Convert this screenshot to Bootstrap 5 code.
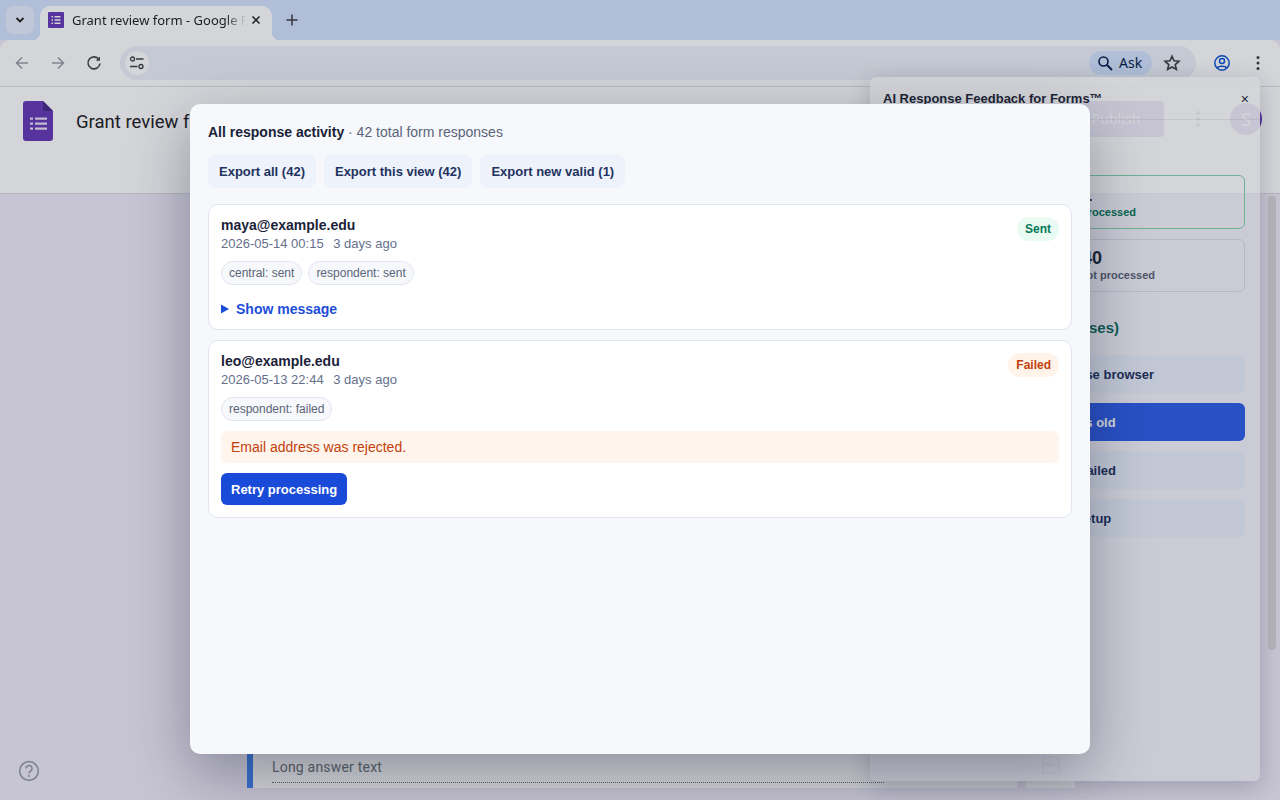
<!DOCTYPE html>
<html lang="en">
<head>
<meta charset="utf-8">
<title>Grant review form</title>
<link href="https://cdn.jsdelivr.net/npm/bootstrap@5.3.0/dist/css/bootstrap.min.css" rel="stylesheet">
<style>
html,body{height:800px;overflow:hidden}
body{background:#f0ebf8;font-family:"Liberation Sans",Arial,sans-serif;position:relative;color:#1f2937}
.tabstrip{height:40px;background:#d3e3fd;padding:6px 0 0 6px}
.tab-menu{width:28px;height:28px;border-radius:8px;background:#e6eefc}
.chrome-tab{width:232px;height:34px;margin-left:6px;background:#fff;border-radius:10px 10px 0 0;padding:0 8px 6px;font:13px/28px "Noto Sans",sans-serif;color:#1f1f1f;position:relative}
.chrome-tab::before,.chrome-tab::after{content:"";position:absolute;bottom:0;width:8px;height:8px}
.chrome-tab::before{left:-8px;background:radial-gradient(circle at 0 0,transparent 8px,#fff 8.5px)}
.chrome-tab::after{right:-8px;background:radial-gradient(circle at 100% 0,transparent 8px,#fff 8.5px)}
.tab-title{width:174px;margin-left:8px;overflow:hidden;white-space:nowrap;-webkit-mask-image:linear-gradient(90deg,#000 88%,transparent);mask-image:linear-gradient(90deg,#000 88%,transparent)}
.tab-close{margin-left:auto;margin-right:2px}
.plus-wrap{margin-left:12px;padding-top:6px}
.toolbar{height:47px;background:#fff;border-bottom:1px solid #e0e0e0;border-radius:10px 10px 0 0;padding:6px 0 0 13px;margin-top:0}
.nav-ico{width:36px;flex:none;height:34px}
.omnibox{width:1076px;height:34px;margin-left:-1px;background:#edf1f8;border-radius:17px;padding:0 44px 0 5px;position:relative}
.site-ico{width:24px;height:24px;border-radius:50%;background:#fff}
.ask-pill{width:63px;height:24px;border-radius:12px;background:#d3e3fd;margin-left:auto;font:14px/24px "Noto Sans",sans-serif;color:#041e49;gap:6px;padding-left:8px}
.star-ico{position:absolute;right:15px;top:8px}
.prof-ico{margin-left:18px}
.dots-ico{margin-left:26px}
.form-head{height:107px;background:#fff;border-bottom:1px solid #dadce0;padding:14px 18px 0 23px;position:relative}
.doc-title{font:18.500px/1 Roboto,sans-serif;color:#202124;margin-left:23px;margin-top:12px}
.publish-btn{position:absolute;left:1068px;top:14px;width:96px;height:36px;border-radius:4px;background:#673ab7;color:#fff;font:14px/36px "Noto Sans",sans-serif;text-align:center}
.more-dots{position:absolute;left:1196px;top:23px}
.avatar-s{position:absolute;left:1230px;top:16px;width:32px;height:32px;border-radius:50%;background:#673ab7;color:#fff;font:18px/32px "Noto Sans",sans-serif;text-align:center}
.form-body{height:606px;padding-left:247px;padding-bottom:12px;position:relative}
.q-card{width:770px;height:54px;background:#fff;border-left:6px solid #4285f4;padding:24px 0 0 19px;font:14px/18px Roboto,sans-serif;letter-spacing:.2px;color:#70757a;margin-top:auto}
.q-line{width:612px;border-bottom:1px dotted #70757a;margin-top:6px}
.q-side{width:49px;height:54px;background:#fff;margin-left:9px;margin-top:auto;padding-top:21px}
.scroll-thumb{position:absolute;left:1268px;top:2px;width:8px;height:454px;background:#dadada;border-radius:4px}
.help-ico{position:absolute;left:18px;top:566px}
.side-panel{position:absolute;left:870px;top:77px;width:390px;height:704px;border-radius:6px;background:linear-gradient(rgba(255,255,255,.9) 116px,rgba(244,244,251,.9) 116px);box-shadow:0 6px 24px rgba(15,23,42,.22);padding:0 15px 0 13px}
.panel-head{height:43px;border-bottom:1px solid rgba(15,23,42,.08);margin:0 -15px 0 -13px;padding:14px 11px 0 13px;font-size:13px;font-weight:700;line-height:16px;color:#1f2937}
.panel-x{font-size:14px;font-weight:400;color:#1f2937;margin-left:auto;margin-right:0}
.stat-box{height:54px;border:1px solid #d9dce6;border-radius:6px;text-align:right;padding-top:8px}
.stat-new{border-color:#86d4ad;margin-top:55px}
.stat-old{height:53px;margin-top:10px;padding-right:89px;padding-top:7px}
.stat-new{padding-right:108px}
.stat-num{font-size:18px;line-height:22px;font-weight:700;color:#1f2937}
.stat-new .stat-num{padding-right:44px}
.stat-old .stat-num{padding-right:53px}
.stat-cap{font-size:11px;line-height:13px;font-weight:700;color:#5b6478}
.stat-new .stat-cap{color:#047857}
.panel-h{font-size:15px;line-height:20px;font-weight:700;color:#0f6b5b;margin-top:26px;text-align:right;padding-right:126px;margin-bottom:17px}
.panel-btn{height:38px;border-radius:6px;background:#eaf0fb;color:#233260;font-size:13px;font-weight:700;line-height:38px;padding-top:1px;text-align:center;margin-bottom:10px;white-space:nowrap}
.panel-on{background:#2f5fe8;color:#fff}
.scrim{position:absolute;inset:0;background:rgba(15,23,42,.18)}
.resp-modal{position:absolute;left:190px;top:104px;width:900px;height:650px;background:#f6f8fc;border-radius:10px;box-shadow:0 20px 60px rgba(15,23,42,.35);padding:18px}
.modal-sum{font-size:14px;line-height:20px;color:#5b6478}
.modal-sum strong{color:#1a2238}
.exp-row{margin-top:12px;margin-bottom:16px}
.exp-btn{height:34px;border:0;border-radius:8px;background:#eef3fb;color:#233260;font-size:13px;font-weight:700;padding:1px 11px 0;line-height:33px}
.resp-card{background:#fff;border:1px solid #e1e5ef;border-radius:10px;padding:12px;margin-bottom:10px;position:relative}
.resp-mail{font-size:14px;line-height:17px;font-weight:700;color:#1a2238}
.resp-date{font-size:13px;line-height:19px;color:#64708a}
.resp-date span{margin-left:6px}
.chip-row{margin-top:8px;gap:6px}
.tag-chip{height:24px;border:1px solid #e1e5ef;border-radius:12px;background:#f6f8fb;font-size:12px;line-height:22px;padding:0 7px;color:#5b6478}
.state-pill{position:absolute;right:12px;top:12px;height:24px;border-radius:12px;font-size:12px;line-height:24px;font-weight:700;padding:0 8px}
.state-sent{background:#e9fbf2;color:#047857}
.state-fail{background:#fff3ea;color:#c2410c}
.show-msg{margin-top:15px;font-size:14px;line-height:18px;font-weight:700;color:#1d4ed8;cursor:pointer;margin-bottom:-1px}
.show-msg summary{list-style:none;display:flex;align-items:center;gap:7px}
.show-msg summary::-webkit-details-marker{display:none}
.err-box{height:32px;margin-top:10px;background:#fff5ed;border-radius:6px;font-size:14px;line-height:32px;color:#c2410c;padding:0 10px}
.retry-btn{height:32px;margin-top:10px;border:0;border-radius:6px;background:#1a4bd8;color:#fff;font-size:13px;font-weight:700;padding:1px 10px 0;line-height:31px;display:block}
</style>
</head>
<body>
<div class="tabstrip d-flex">
  <div class="tab-menu d-flex align-items-center justify-content-center">
    <svg width="12" height="12" viewBox="0 0 12 12"><path d="M2.500 4l3.500 3.500L9.500 4" fill="none" stroke="#1f1f1f" stroke-width="1.800"/></svg>
  </div>
  <div class="chrome-tab d-flex align-items-center">
    <svg width="16" height="16" viewBox="0 0 16 16"><rect width="16" height="16" rx="1" fill="#673ab7"/><path d="M3.500 4h1.500v1.500H3.500zM3.500 7.250h1.500v1.500H3.500zM3.500 10.500h1.500V12H3.500zM6.500 4h6v1.500h-6zM6.500 7.250h6v1.500h-6zM6.500 10.500h6V12h-6z" fill="#fff"/></svg>
    <div class="tab-title">Grant review form - Google Forms</div>
    <svg class="tab-close" width="12" height="12" viewBox="0 0 12 12"><path d="M2.500 2.500l7 7M9.500 2.500l-7 7" stroke="#1f1f1f" stroke-width="1.500"/></svg>
  </div>
  <div class="plus-wrap"><svg class="d-block" width="16" height="16" viewBox="0 0 16 16"><path d="M8 2.500v11M2.500 8h11" stroke="#3c4043" stroke-width="1.500"/></svg></div>
</div>

<div class="toolbar d-flex">
  <div class="nav-ico d-flex align-items-center"><svg width="18" height="18" viewBox="0 0 18 18"><path d="M15 9H4M9 3.500L3.500 9 9 14.500" fill="none" stroke="#9aa0a6" stroke-width="1.500"/></svg></div>
  <div class="nav-ico d-flex align-items-center"><svg width="18" height="18" viewBox="0 0 18 18"><path d="M3 9h11M9 3.500L14.500 9 9 14.500" fill="none" stroke="#9aa0a6" stroke-width="1.500"/></svg></div>
  <div class="nav-ico d-flex align-items-center"><svg width="18" height="18" viewBox="0 0 18 18"><path d="M14 5.500A6 6 0 1 0 15 9.500" fill="none" stroke="#474747" stroke-width="1.600"/><path d="M15 2.500v4.200h-4.200z" fill="#474747"/></svg></div>
  <div class="omnibox d-flex align-items-center">
    <div class="site-ico d-flex align-items-center justify-content-center"><svg width="16" height="14" viewBox="0 0 16 14"><circle cx="3.500" cy="3" r="2" fill="none" stroke="#3c4043" stroke-width="1.300"/><path d="M7 3h7.500M1 10.500h7.500" stroke="#3c4043" stroke-width="1.300"/><circle cx="12" cy="10.500" r="2" fill="none" stroke="#3c4043" stroke-width="1.300"/></svg></div>
    <div class="ask-pill d-flex align-items-center">
      <svg width="16" height="16" viewBox="0 0 16 16" class="flex-none"><circle cx="6.500" cy="6.500" r="4.500" fill="none" stroke="#041e49" stroke-width="1.600"/><path d="M10 10l5 5" stroke="#041e49" stroke-width="1.800"/></svg>
      <span>Ask</span>
    </div>
    <svg class="star-ico" width="18" height="18" viewBox="0 0 18 18"><path d="M9 2.200l2 4.600 5 .5-3.800 3.300 1.200 4.900L9 13l-4.400 2.500 1.200-4.900L2 7.300l5-.5z" fill="none" stroke="#3c4043" stroke-width="1.600"/></svg>
  </div>
  <svg class="prof-ico nav-ico" width="16" height="34" viewBox="0 0 16 34" style="width:16px"><circle cx="8" cy="17" r="7.200" fill="none" stroke="#0b57d0" stroke-width="1.500"/><circle cx="8" cy="15" r="2.500" fill="none" stroke="#0b57d0" stroke-width="1.500"/><path d="M3.500 22c1-2.500 8-2.500 9 0" fill="none" stroke="#0b57d0" stroke-width="1.500"/></svg>
  <svg class="dots-ico nav-ico" width="4" height="34" viewBox="0 0 4 34" style="width:4px"><circle cx="2" cy="11.500" r="1.500" fill="#3c4043"/><circle cx="2" cy="17" r="1.500" fill="#3c4043"/><circle cx="2" cy="22.500" r="1.500" fill="#3c4043"/></svg>
</div>

<div class="form-head d-flex align-items-start">
  <svg width="30" height="40" viewBox="0 0 30 40"><path d="M3 0h17l10 10v27a3 3 0 0 1-3 3H3a3 3 0 0 1-3-3V3a3 3 0 0 1 3-3z" fill="#673ab7"/><path d="M20 0l10 10H20z" fill="#4a2a8a"/><path d="M7 16.500h3v2.200H7zM7 21.500h3v2.200H7zM7 26.500h3v2.200H7zM12 16.500h12v2.200H12zM12 21.500h12v2.200H12zM12 26.500h12v2.200H12z" fill="#e8e0f5"/></svg>
  <div class="doc-title">Grant review form</div>
  <div class="publish-btn">Publish</div>
  <svg class="more-dots" width="4" height="18" viewBox="0 0 4 18"><circle cx="2" cy="3" r="2" fill="#5f6368"/><circle cx="2" cy="9" r="2" fill="#5f6368"/><circle cx="2" cy="15" r="2" fill="#5f6368"/></svg>
  <div class="avatar-s">S</div>
</div>

<div class="form-body d-flex">
  <div class="q-card">Long answer text<div class="q-line"></div></div>
  <div class="q-side d-flex justify-content-center"><svg width="18" height="20" viewBox="0 0 18 20"><rect x=".75" y="2" width="16.500" height="7" fill="none" stroke="#9aa0a6" stroke-width="1.500"/><rect x=".75" y="11" width="16.500" height="7" fill="none" stroke="#9aa0a6" stroke-width="1.500"/></svg></div>
  <div class="scroll-thumb"></div>
  <svg class="help-ico" width="22" height="22" viewBox="0 0 22 22"><circle cx="11" cy="11" r="9.300" fill="none" stroke="#9aa0a6" stroke-width="1.700"/><path d="M8 8.600a3 3 0 1 1 4.700 2.400c-1 .7-1.700 1.300-1.700 2.500" fill="none" stroke="#9aa0a6" stroke-width="1.700"/><circle cx="11" cy="16" r="1.100" fill="#9aa0a6"/></svg>
</div>

<aside class="side-panel">
  <div class="panel-head d-flex"><span>AI Response Feedback for Forms™</span><span class="panel-x">×</span></div>
  <div class="stat-box stat-new"><div class="stat-num">1</div><div class="stat-cap">Not processed</div></div>
  <div class="stat-box stat-old"><div class="stat-num">40</div><div class="stat-cap">Older, not processed</div></div>
  <div class="panel-h">Responses)</div>
  <div class="panel-btn">Process, don't close browser</div>
  <div class="panel-btn panel-on">Only 30 days old</div>
  <div class="panel-btn">Reprocess failed</div>
  <div class="panel-btn">Continue setup</div>
</aside>

<div class="scrim"></div>

<div class="resp-modal" role="dialog">
  <div class="modal-sum"><strong>All response activity</strong> · 42 total form responses</div>
  <div class="exp-row d-flex gap-2">
    <button class="exp-btn" type="button">Export all (42)</button>
    <button class="exp-btn" type="button">Export this view (42)</button>
    <button class="exp-btn" type="button">Export new valid (1)</button>
  </div>
  <div class="resp-card">
    <div class="resp-mail">maya@example.edu</div>
    <div class="resp-date">2026-05-14 00:15 <span>3 days ago</span></div>
    <div class="chip-row d-flex"><div class="tag-chip">central: sent</div><div class="tag-chip">respondent: sent</div></div>
    <details class="show-msg"><summary><svg width="8" height="10" viewBox="0 0 8 10"><path d="M0 .5L8 5 0 9.500z" fill="#1d4ed8"/></svg>Show message</summary></details>
    <div class="state-pill state-sent">Sent</div>
  </div>
  <div class="resp-card">
    <div class="resp-mail">leo@example.edu</div>
    <div class="resp-date">2026-05-13 22:44 <span>3 days ago</span></div>
    <div class="chip-row d-flex"><div class="tag-chip">respondent: failed</div></div>
    <div class="err-box">Email address was rejected.</div>
    <button class="retry-btn" type="button">Retry processing</button>
    <div class="state-pill state-fail">Failed</div>
  </div>
</div>
<script src="https://cdn.jsdelivr.net/npm/bootstrap@5.3.0/dist/js/bootstrap.bundle.min.js"></script>
</body>
</html>
